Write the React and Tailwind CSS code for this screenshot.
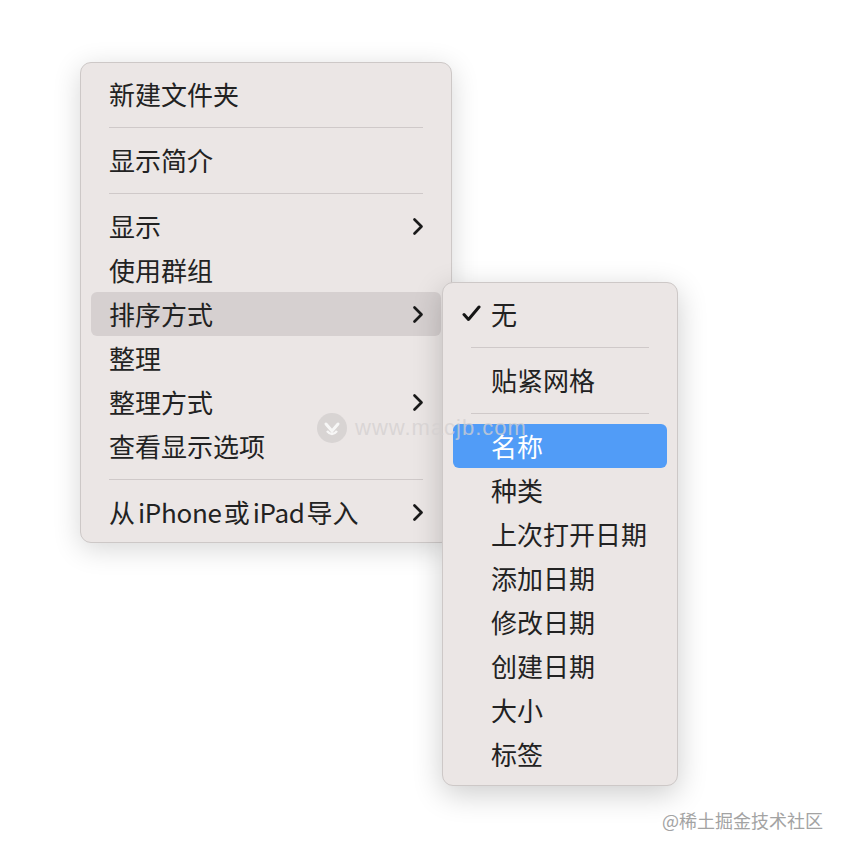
import React from "react";

const font = { fontFamily: '"Noto Sans CJK SC", "Noto Sans", sans-serif' };

function Chevron({ color = "#1a1a1a" }) {
  return (
    <svg width="12" height="19" viewBox="0 0 12 19" fill="none">
      <path d="M2.5 2.5 L9.5 9.5 L2.5 16.5" stroke={color} strokeWidth="2.7" strokeLinecap="round" strokeLinejoin="round" />
    </svg>
  );
}

function Check() {
  return (
    <svg width="19" height="17" viewBox="0 0 19 17" fill="none">
      <path d="M2 9.5 L6.5 14.5 L17 2" stroke="#151515" strokeWidth="3" strokeLinecap="round" strokeLinejoin="round" />
    </svg>
  );
}

function Sep() {
  return (
    <div className="h-[22px] flex items-center mx-[28px]">
      <div className="h-px w-full bg-[#cfc9c9]" />
    </div>
  );
}

function Item({ label, sub, active }) {
  return (
    <div
      className={
        "h-[44px] mx-[10px] pl-[18px] pr-[17px] rounded-[6px] flex items-center justify-between text-[26px] leading-none text-[#222222] " +
        (active ? "bg-[#d6d0d0]" : "")
      }
    >
      <span className="flex items-center">{label}</span>
      {sub && <Chevron />}
    </div>
  );
}

function SubItem({ label, checked, selected }) {
  return (
    <div
      className={
        "h-[44px] mx-[10px] pl-[38px] rounded-[6px] flex items-center relative text-[26px] leading-none " +
        (selected ? "bg-[#519cf7] text-white" : "text-[#222222]")
      }
    >
      {checked && (
        <span className="absolute left-[9px] top-[13px]">
          <Check />
        </span>
      )}
      <span>{label}</span>
    </div>
  );
}

export default function App() {
  return (
    <div className="w-[844px] h-[856px] bg-white relative overflow-hidden" style={font}>
      <div className="pt-[62px] pl-[80px]">
        <div className="w-[372px] rounded-[11px] bg-[#ebe6e5] border border-[#cdc8c7] shadow-[0_6px_28px_rgba(0,0,0,0.16)] pt-[9px] pb-[8px]">
          <Item label="新建文件夹" />
          <Sep />
          <Item label="显示简介" />
          <Sep />
          <Item label="显示" sub />
          <Item label="使用群组" />
          <Item label="排序方式" sub active />
          <Item label="整理" />
          <Item label="整理方式" sub />
          <Item label="查看显示选项" />
          <Sep />
          <Item
            label={
              <>
                <span>从</span>
                <span className="ml-[3px] tracking-[-0.3px]">iPhone</span>
                <span className="ml-[2px]">或</span>
                <span className="ml-[3px] tracking-[-0.3px]">iPad</span>
                <span className="ml-[2px]">导入</span>
              </>
            }
            sub
          />
        </div>
      </div>

      <div className="absolute left-[442px] top-[282px] w-[236px] rounded-[11px] bg-[#ebe6e5] border border-[#cdc8c7] shadow-[0_8px_30px_rgba(0,0,0,0.2)] pt-[9px] pb-[9px]">
        <SubItem label="无" checked />
        <Sep />
        <SubItem label="贴紧网格" />
        <Sep />
        <SubItem label="名称" selected />
        <SubItem label="种类" />
        <SubItem label="上次打开日期" />
        <SubItem label="添加日期" />
        <SubItem label="修改日期" />
        <SubItem label="创建日期" />
        <SubItem label="大小" />
        <SubItem label="标签" />
      </div>

      <div className="absolute left-[317px] top-[413px] flex items-center gap-[8px] pointer-events-none">
        <svg width="30" height="30" viewBox="0 0 30 30">
          <circle cx="15" cy="15" r="15" fill="rgba(200,196,196,0.55)" />
          <path d="M9 11 L15 18 L21 11" stroke="rgba(255,255,255,0.8)" strokeWidth="3" fill="none" strokeLinecap="round" />
          <path d="M10 18 Q15 24 20 18" stroke="rgba(255,255,255,0.8)" strokeWidth="2.5" fill="none" />
        </svg>
        <span className="text-[22px] leading-none tracking-[1px] text-[rgba(212,208,208,0.75)]" style={{ fontFamily: '"Liberation Sans", sans-serif' }}>
          www.macjb.com
        </span>
      </div>

      <div className="absolute left-[662px] top-[811px] text-[18px] leading-none text-[#a3a3a3]">
        @稀土掘金技术社区
      </div>
    </div>
  );
}
